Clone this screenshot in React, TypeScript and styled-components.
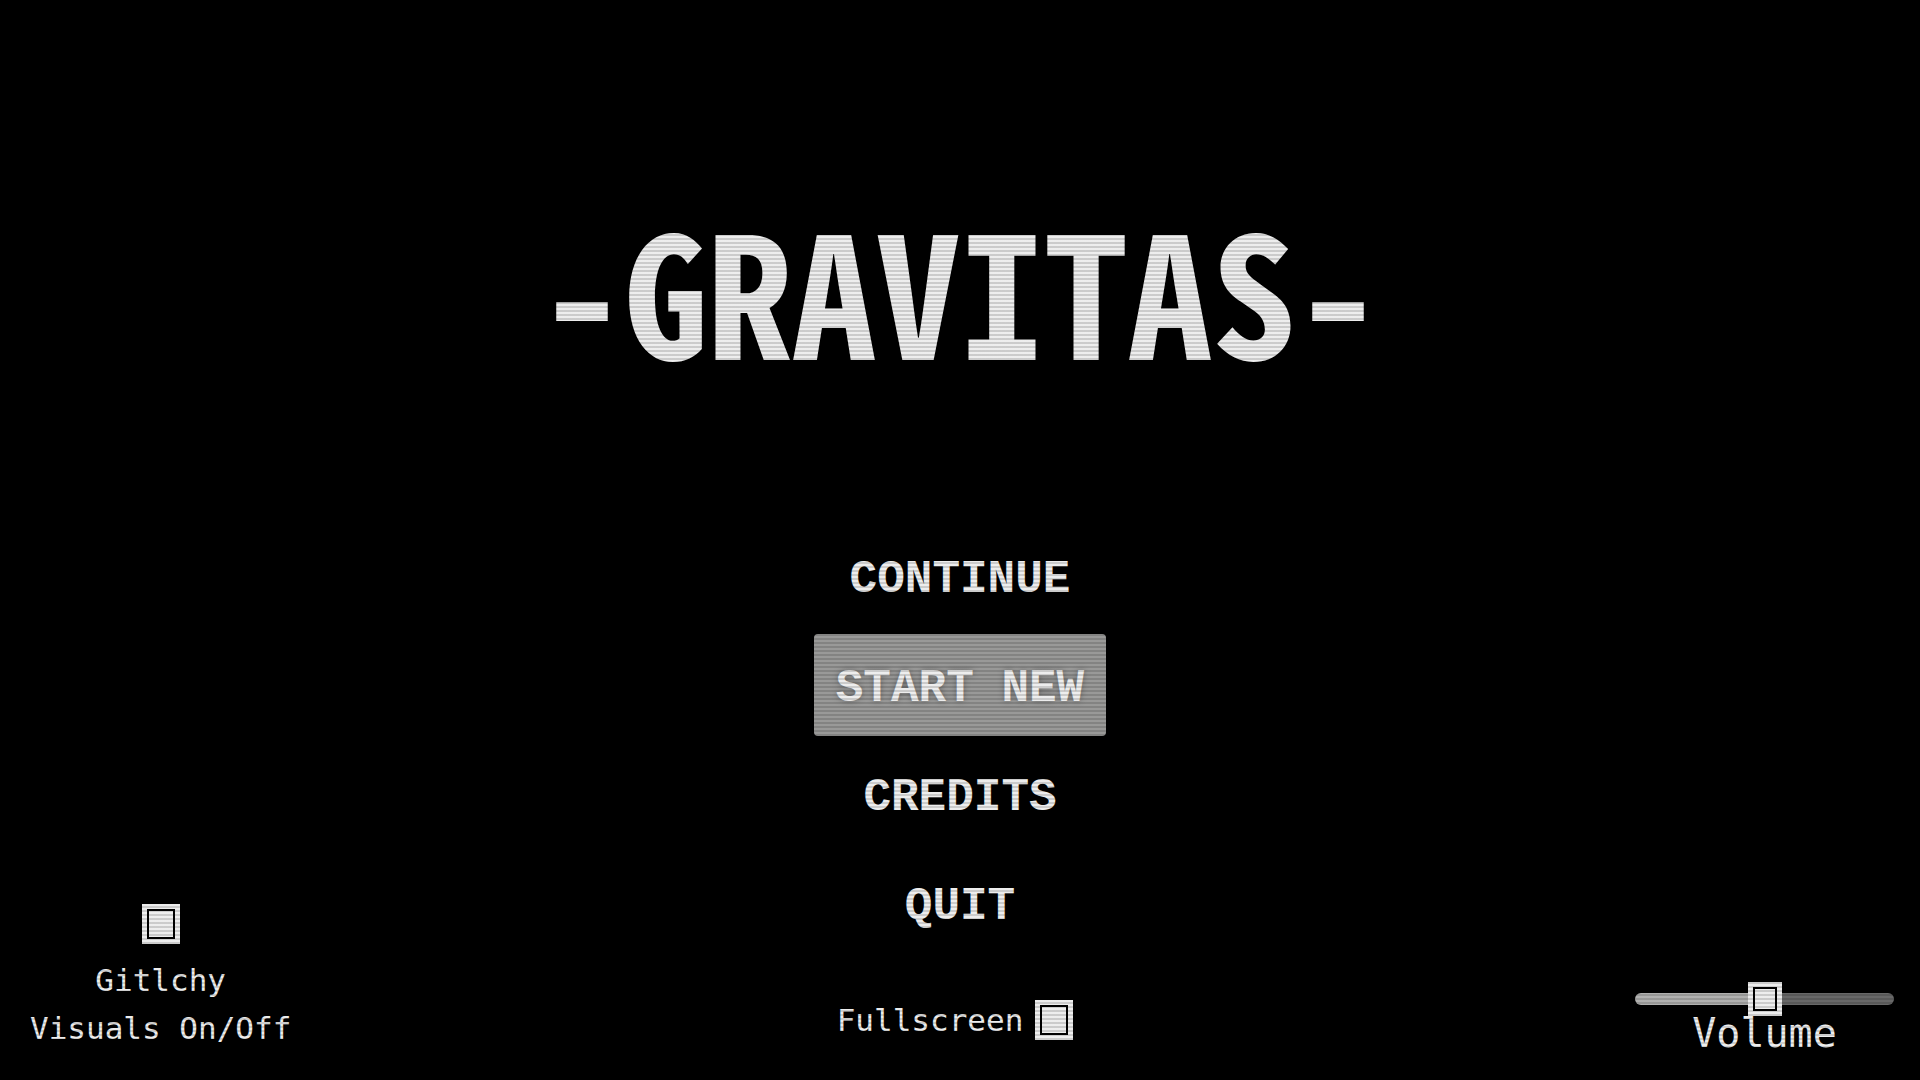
import React, { useState } from "react";
import styled, { createGlobalStyle } from "styled-components";

const ink = "#f2f2f2";
const mono = `"DejaVu Sans Mono", "Liberation Mono", monospace`;

const GlobalStyle = createGlobalStyle`
  *, *::before, *::after { box-sizing: border-box; }
  body { margin: 0; background: #000; color: ${ink}; }
`;

const Screen = styled.main`
  position: relative;
  display: grid;
  grid-template-columns: 1fr auto 1fr;
  min-height: 100vh;
  background: #000;
  overflow: hidden;
`;

const Scanlines = styled.div`
  position: absolute;
  inset: 0;
  pointer-events: none;
  background: repeating-linear-gradient(
    to bottom,
    rgba(0, 0, 0, 0.02) 0 2px,
    rgba(0, 0, 0, 0.16) 2px 4px
  );
`;

const Center = styled.section`
  display: flex;
  flex-direction: column;
  align-items: center;
  padding: 203px 0 38px;
`;

const Title = styled.h1`
  margin: 0 0 154px;
  font: 700 168px/168px "Noto Sans Mono CJK JP", "Roboto Condensed", "Liberation Mono", monospace;
  white-space: nowrap;
`;

const Menu = styled.nav`
  display: flex;
  flex-direction: column;
  align-items: center;
  gap: 7px;
  margin-bottom: 46px;
`;

const MenuButton = styled.button<{ $active: boolean }>`
  min-width: 292px;
  height: 102px;
  padding: 8px 16px 0;
  border: 0;
  border-radius: 4px;
  background: ${(p) => (p.$active ? "#9c9c9b" : "transparent")};
  color: ${ink};
  font: 700 46px/48px "Liberation Mono", monospace;
  text-shadow: ${(p) => (p.$active ? "0 0 6px rgba(0, 0, 0, 0.35)" : "none")};
  white-space: nowrap;
  cursor: pointer;
`;

const Option = styled.label<{ $stacked?: boolean }>`
  display: flex;
  flex-direction: ${(p) => (p.$stacked ? "column" : "row")};
  align-items: center;
  gap: 12px;
  padding-right: ${(p) => (p.$stacked ? 0 : 10)}px;
  font: 400 31px/${(p) => (p.$stacked ? 48 : 40)}px ${mono};
  text-align: center;
  white-space: nowrap;
`;

const Tick = styled.input`
  appearance: none;
  width: 38px;
  height: 40px;
  margin: 0;
  border: 5px solid ${ink};
  background: #000;
  box-shadow: inset 0 0 0 2px #000;
  &:checked { background: ${ink}; }
`;

const Side = styled.aside<{ $end?: boolean }>`
  display: flex;
  flex-direction: column;
  align-self: end;
  justify-self: ${(p) => (p.$end ? "end" : "start")};
  padding: ${(p) => (p.$end ? "0 26px 30px 0" : "0 0 28px 30px")};
`;

const Volume = styled.label`
  display: flex;
  flex-direction: column;
  align-items: center;
  font: 400 40px/34px ${mono};
`;

const Slider = styled.input`
  appearance: none;
  width: 259px;
  height: 34px;
  margin: 0;
  background: transparent;

  &::-webkit-slider-runnable-track {
    height: 12px;
    border-radius: 6px;
    background: linear-gradient(to right, #b4b4b3 50%, #6a6a6a 50%);
  }
  &::-webkit-slider-thumb {
    appearance: none;
    width: 34px;
    height: 34px;
    margin-top: -11px;
    border: 5px solid ${ink};
    background: ${ink};
    box-shadow: inset 0 0 0 2px #000;
  }
`;

const items = ["CONTINUE", "START NEW", "CREDITS", "QUIT"];

export default function App() {
  const [active, setActive] = useState("START NEW");
  return (
    <>
      <GlobalStyle />
      <Screen>
        <Side>
          <Option $stacked>
            <Tick type="checkbox" defaultChecked />
            <span>
              Gitlchy
              <br />
              Visuals On/Off
            </span>
          </Option>
        </Side>
        <Center>
          <Title>-GRAVITAS-</Title>
          <Menu>
            {items.map((item) => (
              <MenuButton
                key={item}
                type="button"
                $active={item === active}
                onMouseEnter={() => setActive(item)}
                onFocus={() => setActive(item)}
              >
                {item}
              </MenuButton>
            ))}
          </Menu>
          <Option>
            Fullscreen
            <Tick type="checkbox" defaultChecked />
          </Option>
        </Center>
        <Side $end>
          <Volume>
            <Slider type="range" min={0} max={100} defaultValue={50} />
            Volume
          </Volume>
        </Side>
        <Scanlines />
      </Screen>
    </>
  );
}
